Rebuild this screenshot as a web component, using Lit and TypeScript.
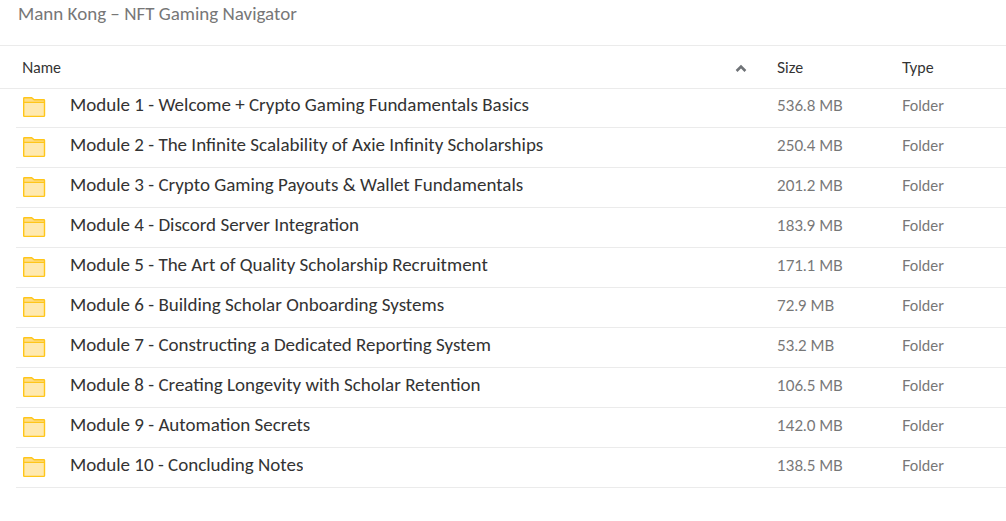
import { LitElement, html, css } from "lit";
import { customElement, state } from "lit/decorators.js";

interface Entry {
  name: string;
  size: string;
}

const ENTRIES: Entry[] = [
  { name: "Module 1 - Welcome + Crypto Gaming Fundamentals Basics", size: "536.8 MB" },
  { name: "Module 2 - The Infinite Scalability of Axie Infinity Scholarships", size: "250.4 MB" },
  { name: "Module 3 - Crypto Gaming Payouts & Wallet Fundamentals", size: "201.2 MB" },
  { name: "Module 4 - Discord Server Integration", size: "183.9 MB" },
  { name: "Module 5 - The Art of Quality Scholarship Recruitment", size: "171.1 MB" },
  { name: "Module 6 - Building Scholar Onboarding Systems", size: "72.9 MB" },
  { name: "Module 7 - Constructing a Dedicated Reporting System", size: "53.2 MB" },
  { name: "Module 8 - Creating Longevity with Scholar Retention", size: "106.5 MB" },
  { name: "Module 9 - Automation Secrets", size: "142.0 MB" },
  { name: "Module 10 - Concluding Notes", size: "138.5 MB" },
];

@customElement("folder-icon")
export class FolderIcon extends LitElement {
  static styles = css`
    :host { display: block; width: 24px; height: 22px; }
    .icon { display: block; }
  `;

  render() {
    return html`<svg class="icon" width="24" height="22" viewBox="0 0 24 22" aria-hidden="true">
      <path d="M1.7 6V2.4a.7.7 0 0 1 .7-.7H9.6l2.6 2h9.6a.7.7 0 0 1 .7.7V6z" fill="#ffdd87" />
      <path d="M1.7 6h20.8v14.3H1.7z" fill="#ffe9b0" />
      <path d="M1.7 6.4h20.8M1.7 19.7V2.4a.7.7 0 0 1 .7-.7H9.6l2.6 2h9.6a.7.7 0 0 1 .7.7V19.7a.7.7 0 0 1-.7.7H2.4a.7.7 0 0 1-.7-.7z" fill="none" stroke="#ffc61a" stroke-width="1.4" />
    </svg>`;
  }
}

@customElement("app-root")
export class AppRoot extends LitElement {
  static styles = css`
    :host {
      display: block;
      font-family: Lato, Carlito, sans-serif;
      color: #333;
      background: #fff;
    }
    .title {
      margin: 0;
      padding: 2px 18px 19px;
      font-family: Carlito, Lato, sans-serif;
      font-size: 19px;
      line-height: 24px;
      font-weight: 400;
      color: #777;
    }
    .table, .head, .body { display: block; }
    .head {
      border-top: 1px solid #ebebeb;
      border-bottom: 1px solid #ebebeb;
      padding-left: 16px;
    }
    .body { margin-left: 16px; }
    .row {
      display: grid;
      grid-template-columns: minmax(0, 1fr) 125px 104px;
      align-items: center;
    }
    .head .row { height: 42px; }
    .body .row { height: 37px; padding-bottom: 2px; border-bottom: 1px solid #ebebeb; }
    .body .row:first-child { height: 36px; }
    .th, .td { padding: 0; font-weight: 400; text-align: left; font-size: 15px; line-height: 20px; }
    .td { padding-bottom: 4px; color: #777; }
    .namecol { display: flex; align-items: center; }
    .th.namecol { padding-left: 6px; padding-right: 29px; }
    .td.namecol { padding-left: 6px; padding-bottom: 0; gap: 24px; }
    .sort {
      display: flex;
      flex: 1;
      align-items: center;
      justify-content: space-between;
      padding: 0;
      border: 0;
      background: none;
      font: inherit;
      color: inherit;
      cursor: pointer;
    }
    .sort.desc .arrow { transform: rotate(180deg); }
    .link {
      padding-bottom: 4px;
      font-family: Carlito, Lato, sans-serif;
      font-size: 19px;
      line-height: 24px;
      color: #333;
      text-decoration: none;
      white-space: nowrap;
      overflow: hidden;
      text-overflow: ellipsis;
    }
  `;

  @state() private descending = false;

  render() {
    const rows = this.descending ? [...ENTRIES].reverse() : ENTRIES;
    return html`
      <h1 class="title">Mann Kong – NFT Gaming Navigator</h1>
      <table class="table" role="table">
        <thead class="head" role="rowgroup">
          <tr class="row" role="row">
            <th class="th namecol" role="columnheader" aria-sort=${this.descending ? "descending" : "ascending"}>
              <button
                class="sort ${this.descending ? "desc" : ""}"
                @click=${() => (this.descending = !this.descending)}
              >
                Name
                <svg class="arrow" width="14" height="12" viewBox="0 0 14 12" aria-hidden="true">
                  <path d="M2.6 10 7 5.6 11.4 10" fill="none" stroke="#6f7377" stroke-width="2.6" />
                </svg>
              </button>
            </th>
            <th class="th" role="columnheader">Size</th>
            <th class="th" role="columnheader">Type</th>
          </tr>
        </thead>
        <tbody class="body" role="rowgroup">
          ${rows.map(
            (entry) => html`<tr class="row" role="row">
              <td class="td namecol" role="cell">
                <folder-icon></folder-icon>
                <a class="link" href="#">${entry.name}</a>
              </td>
              <td class="td" role="cell">${entry.size}</td>
              <td class="td" role="cell">Folder</td>
            </tr>`
          )}
        </tbody>
      </table>
    `;
  }
}
